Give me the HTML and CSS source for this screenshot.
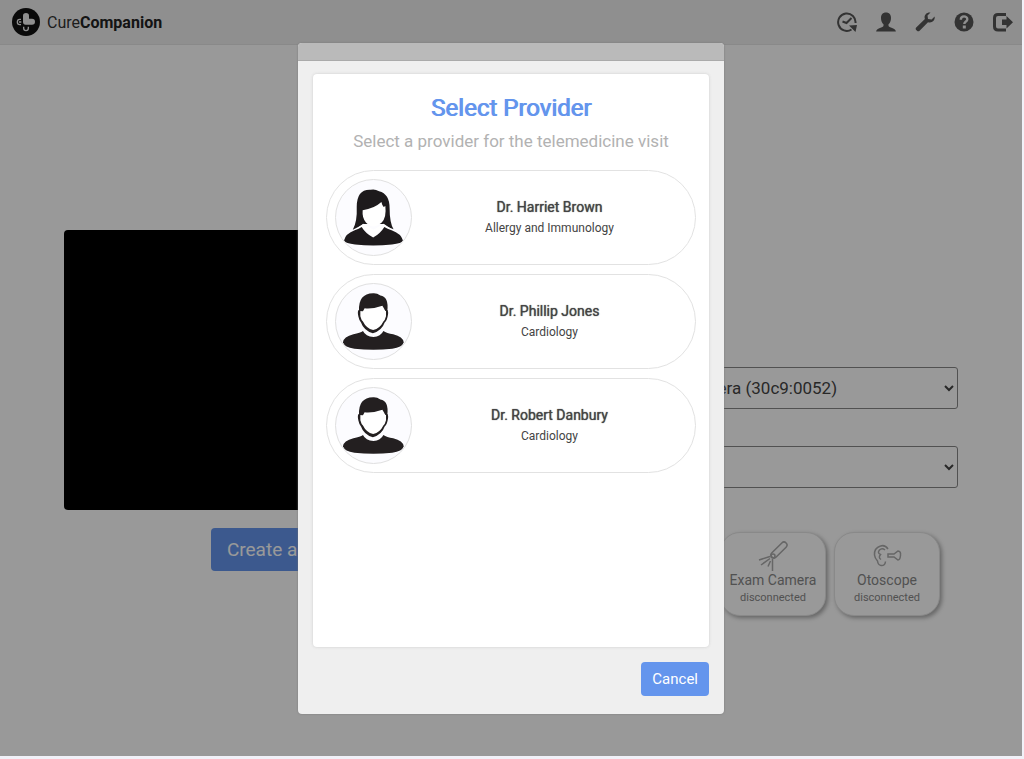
FILE: index.html
```
<!DOCTYPE html>
<html lang="en">
<head>
    <meta charset="UTF-8">
    <meta name="viewport" content="width=device-width, initial-scale=1.0">
    <title>CureCompanion</title>
    <link rel="stylesheet" href="styles.css">
</head>
<body>
    <div class="page">
        <header class="topbar">
            <a href="#" class="brand">
                <svg class="logo" viewBox="0 0 84 84">
                    <circle cx="42" cy="42" r="42" fill="#111"/>
                    <path d="M33 23q0-8 9-8t9 8v9h9q9 0 9 9t-9 9H41q-8 0-8-9z" fill="#eee"/>
                    <path d="M27 34h-4q-7 0-7 8t7 8h4M35 56v5q0 7 7 7t7-7v-5M21 42h7" fill="none" stroke="#eee" stroke-width="4"/>
                </svg>
                <span>Cure<b>Companion</b></span>
            </a>
            <nav class="tools">
                <a href="#" aria-label="History">
                    <svg viewBox="0 0 20 20" fill="none" stroke="currentColor" stroke-width="2">
                        <path d="M18.500 11a8.700 8.700 0 1 0-4 6.500"/>
                        <path d="M5.500 9.500l4 1.500 5-5"/>
                        <path d="M12 13.500l8-.5-1.500 7z" fill="currentColor" stroke="none"/>
                    </svg>
                </a>
                <a href="#" aria-label="Account">
                    <svg viewBox="0 0 20 20" fill="currentColor">
                        <path d="M10 .5c3.300 0 5 2.200 5 5.500 0 3-1 5-2.500 6.300v1.400c0 .8 1 1.200 3 2 2.500 1 4.200 1.500 4.400 3.800H.1c.2-2.300 1.900-2.800 4.400-3.800 2-.8 3-1.200 3-2v-1.400C6 11 5 9 5 6 5 2.700 6.700.5 10 .5z"/>
                    </svg>
                </a>
                <a href="#" aria-label="Settings">
                    <svg viewBox="0 0 20 20" fill="currentColor">
                        <path d="M15.500.5l-3 3 .5 3.500 3.600.4 3-2.900c.6 3.200-1.600 6-4.600 6-.8 0-1.500-.1-2-.3l-8.400 8.600c-.7.7-1.900.7-2.600 0l-.8-.8c-.7-.7-.7-1.800 0-2.500l8.700-8.600C8.500 3.500 11.500-.2 15.500.5z"/>
                    </svg>
                </a>
                <a href="#" aria-label="Help">
                    <svg viewBox="0 0 20 20">
                        <circle cx="10" cy="10" r="9.500" fill="currentColor"/>
                        <path d="M6.800 7.700C6.800 3.200 13.300 3.600 13.300 7.200c0 2.400-3 2.300-3 4.900" fill="none" stroke="#efefef" stroke-width="2.400"/>
                        <path d="M8.800 13.500h3v3h-3z" fill="#efefef"/>
                    </svg>
                </a>
                <a href="#" aria-label="Log out">
                    <svg viewBox="0 0 20 20">
                        <path d="M13 2.500H5Q1.500 2.500 1.500 6v8.500Q1.500 18 5 18h8" fill="none" stroke="currentColor" stroke-width="3"/>
                        <path d="M9 7.500h4.500V4l6.500 6.200-6.500 6.300V13H9z" fill="currentColor"/>
                    </svg>
                </a>
            </nav>
        </header>

        <main class="content">
            <section class="preview">
                <div class="video"></div>
                <button class="btn create">Create an Encounter</button>
            </section>
            <section class="setup">
                <label for="camera">Camera</label>
                <select id="camera">
                    <option>Integrated Camera (30c9:0052)</option>
                </select>
                <label for="microphone">Microphone</label>
                <select id="microphone">
                    <option></option>
                </select>
                <div class="devices">
                    <button class="device">
                        <svg viewBox="0 0 30 30" fill="none" stroke="currentColor" stroke-width="1.500">
                            <rect x="11" y="6" width="20" height="6" rx="3" transform="rotate(-45 21 9)"/>
                            <circle cx="15" cy="15" r="2"/>
                            <path d="M12 15.500L1 19M12 17.500L3 24M12.500 20L10 25.500M14.500 18v12"/>
                        </svg>
                        <span class="device-name">Exam Camera</span>
                        <span class="device-state">disconnected</span>
                    </button>
                    <button class="device">
                        <svg viewBox="0 0 30 30" fill="none" stroke="currentColor" stroke-width="1.500">
                            <path d="M16 8Q13 3.500 8.500 5 2 7 2.500 14q.3 3 3 6 .5 4 3.500 4.500 4 .5 4.500-4"/>
                            <path d="M13 9q-3-2.500-5.500 0-2.500 3 1 4.500-2.500 3 .5 5"/>
                            <path d="M16 13h6l4-3q3 0 2.500 4.500T26 19l-4-3h-6z"/>
                        </svg>
                        <span class="device-name">Otoscope</span>
                        <span class="device-state">disconnected</span>
                    </button>
                </div>
            </section>
        </main>

        <div class="overlay">
            <div class="modal" role="dialog" aria-modal="true" aria-labelledby="modal-title">
                <div class="modal-header"></div>
                <div class="modal-body">
                    <div class="card">
                        <h2 id="modal-title">Select Provider</h2>
                        <p class="subtitle">Select a provider for the telemedicine visit</p>
                        <div class="providers">
                            <button class="provider">
                                <svg class="avatar" viewBox="0 0 228 228">
                                    <path d="M63 82Q63 28 105 30q12-4 26 4 32 8 32 52 0 44 12 64-19-6-33-16H84q-13 8-33 17 14-25 12-69z" fill="#1d1a1c"/>
                                    <path d="M81 92q35-5 57-25 2 10 7 15l5-3q4 35-11 50-15 12-26 12-10 0-22-12-12-14-10-37z" fill="#fff"/>
                                    <path d="M83 133l31 18 31-18 20 14-2 5-22-4-27 27-27-27-22 5-1-6z" fill="#fff"/>
                                    <path d="M24 185q5-22 33-32 13-5 21-10 12 20 35 32 22-12 34-32 9 5 22 10 29 10 35 32-4 8-34 11-57 6-112 0-29-3-34-11z" fill="#1d1a1c"/>
                                </svg>
                                <span class="info">
                                    <span class="name">Dr. Harriet Brown</span>
                                    <span class="specialty">Allergy and Immunology</span>
                                </span>
                            </button>
                            <button class="provider">
                                <svg class="avatar" viewBox="0 0 228 228">
                                    <path d="M70 78q-6 3-2 21 3 14 8 18 8 24 36 33 28-9 36-33 6-4 9-18 4-18-2-21z" fill="#231f20"/>
                                    <path d="M74 76v22q3 12 8 16 10 21 31 26 21-5 31-26 5-4 8-16V82q-6-3-12-16-30 10-66 10z" fill="#fff"/>
                                    <path d="M70 82q-3-53 43-54 11-1 22 7 26 4 21 47l-6-1-9-15q-31 11-54 8l-5 9z" fill="#231f20"/>
                                    <path d="M21 178q2-18 32-25 21-4 29-10 8 17 32 18 22-1 30-18 10 7 30 10 30 7 32 25-5 15-35 19-57 6-115 0-30-4-35-19z" fill="#231f20"/>
                                </svg>
                                <span class="info">
                                    <span class="name">Dr. Phillip Jones</span>
                                    <span class="specialty">Cardiology</span>
                                </span>
                            </button>
                            <button class="provider">
                                <svg class="avatar" viewBox="0 0 228 228">
                                    <path d="M70 78q-6 3-2 21 3 14 8 18 8 24 36 33 28-9 36-33 6-4 9-18 4-18-2-21z" fill="#231f20"/>
                                    <path d="M74 76v22q3 12 8 16 10 21 31 26 21-5 31-26 5-4 8-16V82q-6-3-12-16-30 10-66 10z" fill="#fff"/>
                                    <path d="M70 82q-3-53 43-54 11-1 22 7 26 4 21 47l-6-1-9-15q-31 11-54 8l-5 9z" fill="#231f20"/>
                                    <path d="M21 178q2-18 32-25 21-4 29-10 8 17 32 18 22-1 30-18 10 7 30 10 30 7 32 25-5 15-35 19-57 6-115 0-30-4-35-19z" fill="#231f20"/>
                                </svg>
                                <span class="info">
                                    <span class="name">Dr. Robert Danbury</span>
                                    <span class="specialty">Cardiology</span>
                                </span>
                            </button>
                        </div>
                    </div>
                    <div class="modal-footer">
                        <button class="btn cancel">Cancel</button>
                    </div>
                </div>
            </div>
        </div><!--overlay-->
    </div><!--page-->
</body>
</html>
```

FILE: styles.css
```
*{
    box-sizing: border-box;
}

body{
    margin: 0;
    height: 100vh;
    padding: 0 2px 3px 0;
    background: #f1f1f8;
    font-family: Roboto, sans-serif;
    color: #444;
}

button, select{
    font-family: inherit;
    color: inherit;
}

.page{
    position: relative;
    min-height: 100%;
    display: flex;
    flex-direction: column;
    background: #fff;
}

.topbar{
    display: flex;
    justify-content: space-between;
    align-items: center;
    height: 45px;
    padding: 0 9px 0 12px;
    background: #efefef;
    border-bottom: 1px solid #e4e4e4;
}

.brand{
    display: flex;
    align-items: center;
    gap: 7px;
    font-size: 16px;
    color: #333;
    text-decoration: none;
}

.brand b{
    color: #222;
}

.logo{
    width: 28px;
    height: 28px;
}

.tools{
    display: flex;
    gap: 19px;
}

.tools a{
    display: flex;
    color: #555;
}

.tools svg{
    width: 20px;
    height: 20px;
}

.content{
    flex: 1;
    display: grid;
    grid-template-columns: 4fr 3fr;
    gap: 24px;
    align-items: center;
    padding: 0 64px;
}

.preview{
    display: flex;
    flex-direction: column;
    align-items: center;
    gap: 18px;
}

.video{
    width: 100%;
    height: 280px;
    background: #000;
    border-radius: 4px;
}

.btn{
    border: none;
    border-radius: 4px;
    background: #6495ed;
    color: #fff;
    cursor: pointer;
}

.create{
    padding: 10px 16px;
    font-size: 19px;
    line-height: 23px;
}

.setup{
    display: flex;
    flex-direction: column;
    justify-content: flex-end;
    min-height: 430px;
}

.setup label{
    height: 37px;
    padding-top: 12px;
    font-size: 16px;
}

.setup select{
    height: 42px;
    padding: 0 4px 0 11px;
    font-size: 17px;
    background: #fff;
    border: 1px solid #888;
    border-radius: 3px;
}

.devices{
    display: flex;
    justify-content: flex-end;
    gap: 8px;
    margin-top: 44px;
    padding-right: 18px;
}

.device{
    display: flex;
    flex-direction: column;
    align-items: center;
    width: 106px;
    height: 84px;
    padding: 8px 0 0;
    background: #fff;
    border: 1px solid #e4e4e4;
    border-radius: 20px;
    box-shadow: 2px 2px 4px #aaa;
    color: #888;
}

.device svg{
    width: 30px;
    height: 30px;
    color: #aaa;
}

.device-name{
    font-size: 14px;
    line-height: 18px;
}

.device-state{
    font-size: 11px;
    line-height: 18px;
}

/* dialog */
.overlay{
    position: absolute;
    inset: 0;
    display: flex;
    justify-content: center;
    align-items: center;
    background: rgba(0, 0, 0, 0.4);
}

.modal{
    width: 426px;
    max-width: 100%;
    overflow: hidden;
    background: #efefef;
    border-radius: 4px;
    box-shadow: 0 0 2px #777;
}

.modal-header{
    height: 18px;
    background: #bababa;
    border-bottom: 1px solid #aaa;
}

.modal-body{
    padding: 13px 15px 18px;
}

.card{
    min-height: 573px;
    padding: 19px 13px;
    background: #fff;
    border-radius: 4px;
    box-shadow: 0 0 3px #ccc;
    text-align: center;
}

.card h2{
    margin: 0;
    font-size: 24px;
    line-height: 30px;
    font-weight: 400;
    color: #6495ed;
    text-shadow: 1px 0 0 #6495ed;
}

.subtitle{
    margin: 6px 0 17px;
    font-size: 17px;
    line-height: 24px;
    color: #b2b2b2;
}

.providers{
    display: flex;
    flex-direction: column;
    gap: 9px;
}

.provider{
    display: flex;
    align-items: center;
    padding: 8px;
    background: #fff;
    border: 1px solid #e2e2e2;
    border-radius: 48px;
    cursor: pointer;
}

.avatar{
    width: 77px;
    height: 77px;
    background: #fcfcff;
    border: 1px solid #e0e0e0;
    border-radius: 50%;
}

.info{
    flex: 1;
    display: flex;
    flex-direction: column;
    padding-top: 2px;
}

.name{
    font-size: 14px;
    line-height: 21px;
    text-shadow: 0 0 1px #444;
}

.specialty{
    font-size: 12px;
    line-height: 21px;
}

.modal-footer{
    display: flex;
    justify-content: flex-end;
    margin-top: 15px;
}

.cancel{
    padding: 6px 11px;
    font-size: 15px;
    line-height: 22px;
}
```
